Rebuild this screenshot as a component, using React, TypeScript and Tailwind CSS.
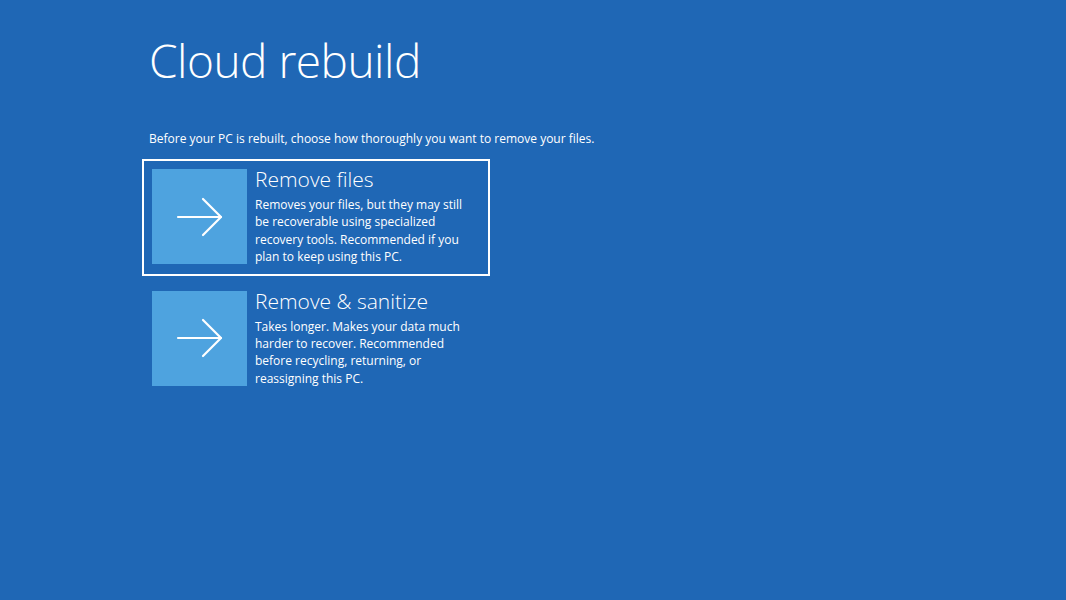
import React from 'react';

const font = { fontFamily: '"Open Sans", "Noto Sans", "Liberation Sans", sans-serif' };

function ArrowTile() {
  return (
    <div className="w-[95px] h-[95px] shrink-0 bg-[#4ea3df] flex items-center justify-center">
      <svg width="48" height="40" viewBox="0 0 48 40" fill="none" stroke="white" strokeWidth="2.2" strokeLinecap="round" strokeLinejoin="round">
        <path d="M2 20 H45" />
        <path d="M27 2 L45 20 L27 38" />
      </svg>
    </div>
  );
}

interface OptionProps {
  title: string;
  lines: string[];
  selected?: boolean;
}

function Option({ title, lines, selected }: OptionProps) {
  return (
    <div
      className={`w-[348px] flex gap-2 px-2 py-2 border-2 ${selected ? 'border-white' : 'border-transparent'}`}
    >
      <ArrowTile />
      <div className="flex flex-col text-white">
        <div className="text-[21px] font-light leading-[20px]">{title}</div>
        <div className="mt-[7px] text-[12px] leading-[17.4px]">
          {lines.map((l) => (
            <div key={l}>{l}</div>
          ))}
        </div>
      </div>
    </div>
  );
}

export default function App() {
  return (
    <div className="w-[1066px] h-[600px] bg-[#1f67b5] overflow-hidden" style={font}>
      <div className="pl-[149px] pt-[28px]">
        <h1 className="text-[46px] font-light leading-[64px] text-white tracking-[-0.5px]">Cloud rebuild</h1>
        <p className="mt-[39px] text-[12px] leading-[16px] text-white">
          Before your PC is rebuilt, choose how thoroughly you want to remove your files.
        </p>
        <div className="mt-[12px] -ml-[7px] flex flex-col gap-[5px]">
          <Option
            selected
            title="Remove files"
            lines={[
              'Removes your files, but they may still',
              'be recoverable using specialized',
              'recovery tools. Recommended if you',
              'plan to keep using this PC.',
            ]}
          />
          <Option
            title="Remove & sanitize"
            lines={[
              'Takes longer. Makes your data much',
              'harder to recover. Recommended',
              'before recycling, returning, or',
              'reassigning this PC.',
            ]}
          />
        </div>
      </div>
    </div>
  );
}
